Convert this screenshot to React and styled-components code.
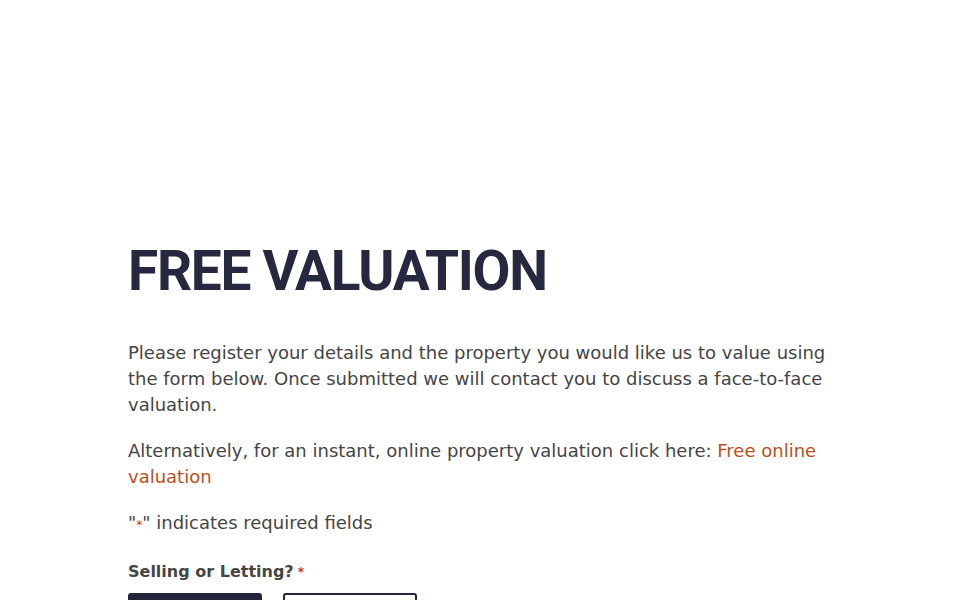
import React from "react";
import styled, { createGlobalStyle } from "styled-components";

const GlobalStyle = createGlobalStyle`
  html, body {
    margin: 0;
    padding: 0;
    background: #fff;
  }
  body {
    font-family: "DejaVu Sans", sans-serif;
    color: #454545;
    overflow: hidden;
  }
`;

const Page = styled.main`
  max-width: 704px;
  margin: 0 auto;
  padding-top: 237px;
`;

const Title = styled.h1`
  margin: 0 0 35px;
  font-family: "Roboto", "Inter", sans-serif;
  font-weight: 700;
  font-size: 55px;
  line-height: 68px;
  letter-spacing: -1.3px;
  color: #262840;
`;

const Text = styled.p`
  margin: 0 0 20px;
  font-size: 18px;
  line-height: 26px;
`;

const Link = styled.a`
  color: #b84f22;
  text-decoration: none;
`;

const Req = styled.span`
  color: #c62f2f;
  font-size: 12px;
  vertical-align: ${(p) => (p.$raised ? "3px" : "0")};
`;

const Label = styled.div`
  margin-top: 24px;
  font-weight: 700;
  font-size: 16px;
  line-height: 20px;
  display: flex;
  align-items: center;
  gap: 4px;
`;

const Choices = styled.div`
  display: flex;
  gap: 21px;
  margin-top: 11px;
`;

const Choice = styled.button`
  width: 134px;
  height: 44px;
  border-radius: 3px;
  border: 2px solid #23253a;
  background: ${(p) => (p.$active ? "#23253a" : "#fff")};
  color: ${(p) => (p.$active ? "#fff" : "#23253a")};
  font-family: "DejaVu Sans", sans-serif;
  font-size: 16px;
  font-weight: 700;
`;

export default function App() {
  return (
    <>
      <GlobalStyle />
      <Page>
        <Title>FREE VALUATION</Title>
        <Text>
          Please register your details and the property you would like us to
          value using the form below. Once submitted we will contact you to
          discuss a face-to-face valuation.
        </Text>
        <Text>
          Alternatively, for an instant, online property valuation click here:{" "}
          <Link href="#">Free online valuation</Link>
        </Text>
        <Text>
          "<Req>*</Req>" indicates required fields
        </Text>
        <Label>
          Selling or Letting?<Req $raised>*</Req>
        </Label>
        <Choices>
          <Choice $active>Selling</Choice>
          <Choice>Letting</Choice>
        </Choices>
      </Page>
    </>
  );
}
